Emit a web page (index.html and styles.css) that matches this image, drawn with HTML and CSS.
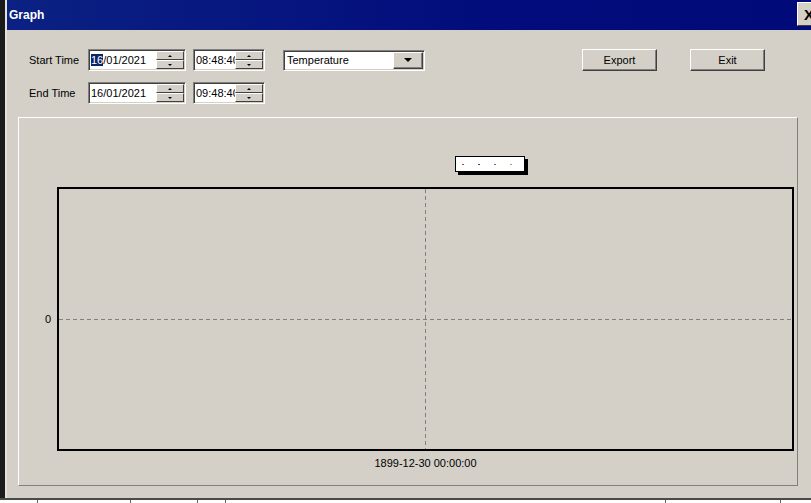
FILE: index.html
```html
<!DOCTYPE html>
<html lang="en">
<head>
    <meta charset="UTF-8">
    <title>Graph</title>
    <link rel="stylesheet" href="styles.css">
</head>
<body>
    <div class="desk">
        <div class="edge"></div>
        <div class="window">
            <div class="titlebar">
                <span class="title">Graph</span>
                <button class="close">X</button>
            </div>
            <div class="controls">
                <div class="row">
                    <span class="lbl">Start Time</span>
                    <div class="field date">
                        <span class="txt"><span class="sel">16</span>/01/2021</span>
                        <div class="spin"><i class="up"></i><i class="down"></i></div>
                    </div>
                    <div class="field time">
                        <span class="txt">08:48:40</span>
                        <div class="spin"><i class="up"></i><i class="down"></i></div>
                    </div>
                    <div class="combo">
                        <span class="txt">Temperature</span>
                        <span class="drop"></span>
                    </div>
                    <button class="btn export">Export</button>
                    <button class="btn exit">Exit</button>
                </div>
                <div class="row">
                    <span class="lbl">End Time</span>
                    <div class="field date">
                        <span class="txt">16/01/2021</span>
                        <div class="spin"><i class="up"></i><i class="down"></i></div>
                    </div>
                    <div class="field time">
                        <span class="txt">09:48:40</span>
                        <div class="spin"><i class="up"></i><i class="down"></i></div>
                    </div>
                </div>
            </div>
            <div class="group">
                <div class="legend">
                    <span class="mark red"></span>
                    <span class="mark dark"></span>
                    <span class="mark blue"></span>
                    <span class="mark tan"></span>
                </div>
                <div class="plot">
                    <div class="hline"></div>
                    <div class="vline"></div>
                    <span class="ylabel">0</span>
                </div>
                <div class="xlabel">1899-12-30 00:00:00</div>
            </div>
        </div>
    </div>
    <div class="taskstrip">
        <span style="width:37px"></span>
        <span style="width:92px"></span>
        <span style="width:66px"></span>
        <span style="width:27px"></span>
        <span style="width:439px"></span>
        <span style="width:114px"></span>
    </div>
</body>
</html>
```

FILE: styles.css
```css
html, body { margin: 0; height: 503px; overflow: hidden; }
body { background: #1b1b1b; font-family: 'Liberation Sans', Arial, sans-serif; font-size: 11px; color: #000; }

.desk { display: flex; height: 498px; }
.edge { width: 5px; flex: none; background: #1b1b1b; }
.window { width: 818px; flex: none; background: #d4d0c8; border-left: 2px solid #e4e1db; display: flex; flex-direction: column; }

.titlebar { height: 30px; flex: none; display: flex; align-items: center; background: linear-gradient(90deg, #0b2183, #020c7c 60%, #000a78); }
.title { color: #fff; font-weight: bold; font-size: 12px; padding-left: 2px; }
.close { margin-left: auto; margin-right: 6px; align-self: flex-start; margin-top: 2px; width: 22px; height: 24px; padding: 0 0 0 6px; background: #d4d0c8; border: 1px solid; border-color: #fff #404040 #404040 #fff; font: bold 15px 'Liberation Sans', Arial, sans-serif; text-align: left; }

.controls { padding: 19px 0 0 22px; display: flex; flex-direction: column; gap: 11px; }
.row { display: flex; align-items: center; height: 22px; }
.lbl { width: 59px; flex: none; }

.field { display: flex; height: 22px; box-sizing: border-box; background: #fff; border: 1px solid; border-color: #808080 #fff #fff #808080; box-shadow: inset 1px 1px #404040, inset -1px -1px #d4d0c8; padding: 1px; }
.field .txt { flex: 1; line-height: 18px; padding-left: 1px; overflow: hidden; white-space: nowrap; }
.sel { background: #0a246a; color: #fff; }
.date { width: 98px; }
.time { width: 72px; margin-left: 7px; }
.date .spin { width: 28px; }
.time .spin { width: 28px; }
.spin { display: flex; flex-direction: column; }
.spin i { flex: 1; background: #d4d0c8; border: 1px solid; border-color: #fff #404040 #404040 #fff; display: flex; align-items: center; justify-content: center; }
.spin i::after { content: ""; border-left: 2px solid transparent; border-right: 2px solid transparent; }
.spin .up::after { border-bottom: 2px solid #000; }
.spin .down::after { border-top: 2px solid #000; }

.combo { width: 142px; height: 21px; margin-left: 18px; box-sizing: border-box; display: flex; background: #fff; border: 1px solid; border-color: #808080 #fff #fff #808080; box-shadow: inset 1px 1px #404040, inset -1px -1px #d4d0c8; padding: 1px; }
.combo .txt { flex: 1; line-height: 17px; padding-left: 2px; }
.drop { width: 28px; background: #d4d0c8; border: 1px solid; border-color: #fff #404040 #404040 #fff; box-shadow: inset -1px -1px #808080; display: flex; align-items: center; justify-content: center; }
.drop::after { content: ""; border-left: 4px solid transparent; border-right: 4px solid transparent; border-top: 4px solid #000; }

.btn { width: 75px; height: 22px; box-sizing: border-box; background: #d4d0c8; border: 1px solid; border-color: #fff #404040 #404040 #fff; box-shadow: inset -1px -1px #808080; font: 11px 'Liberation Sans', Arial, sans-serif; padding: 0; }
.export { margin-left: 157px; }
.exit { margin-left: 33px; }

.group { margin: 13px 27px 0 11px; height: 369px; box-sizing: border-box; border: 1px solid; border-color: #fff #808080 #808080 #fff; }
.legend { margin: 38px 0 0 436px; width: 70px; height: 16px; box-sizing: border-box; background: #fff; border: 1px solid #000; box-shadow: 3px 3px 0 #000; display: flex; align-items: center; gap: 14px; padding-left: 6px; }
.mark { width: 2px; height: 1px; }
.red { background: #c03a3a; }
.dark { background: #404040; }
.blue { background: #58708c; }
.tan { background: #a89a78; }

.plot { position: relative; margin: 15px 0 0 38px; width: 737px; height: 264px; box-sizing: border-box; border: 2px solid #000; }
.hline { position: absolute; left: 0; right: 0; top: 130px; height: 1px; background: repeating-linear-gradient(90deg, #808080 0 4px, transparent 4px 7px); }
.vline { position: absolute; top: 0; bottom: 0; left: 366px; width: 1px; background: repeating-linear-gradient(180deg, #808080 0 4px, transparent 4px 7px); }
.ylabel { position: absolute; right: calc(100% + 8px); top: 124px; line-height: 13px; }
.xlabel { margin-left: 38px; width: 737px; text-align: center; margin-top: 6px; line-height: 13px; }

.taskstrip { height: 3px; border-top: 2px solid #4a4a4a; background: #fff; display: flex; }
.taskstrip span { border-right: 1px solid #606060; flex: none; }
```
